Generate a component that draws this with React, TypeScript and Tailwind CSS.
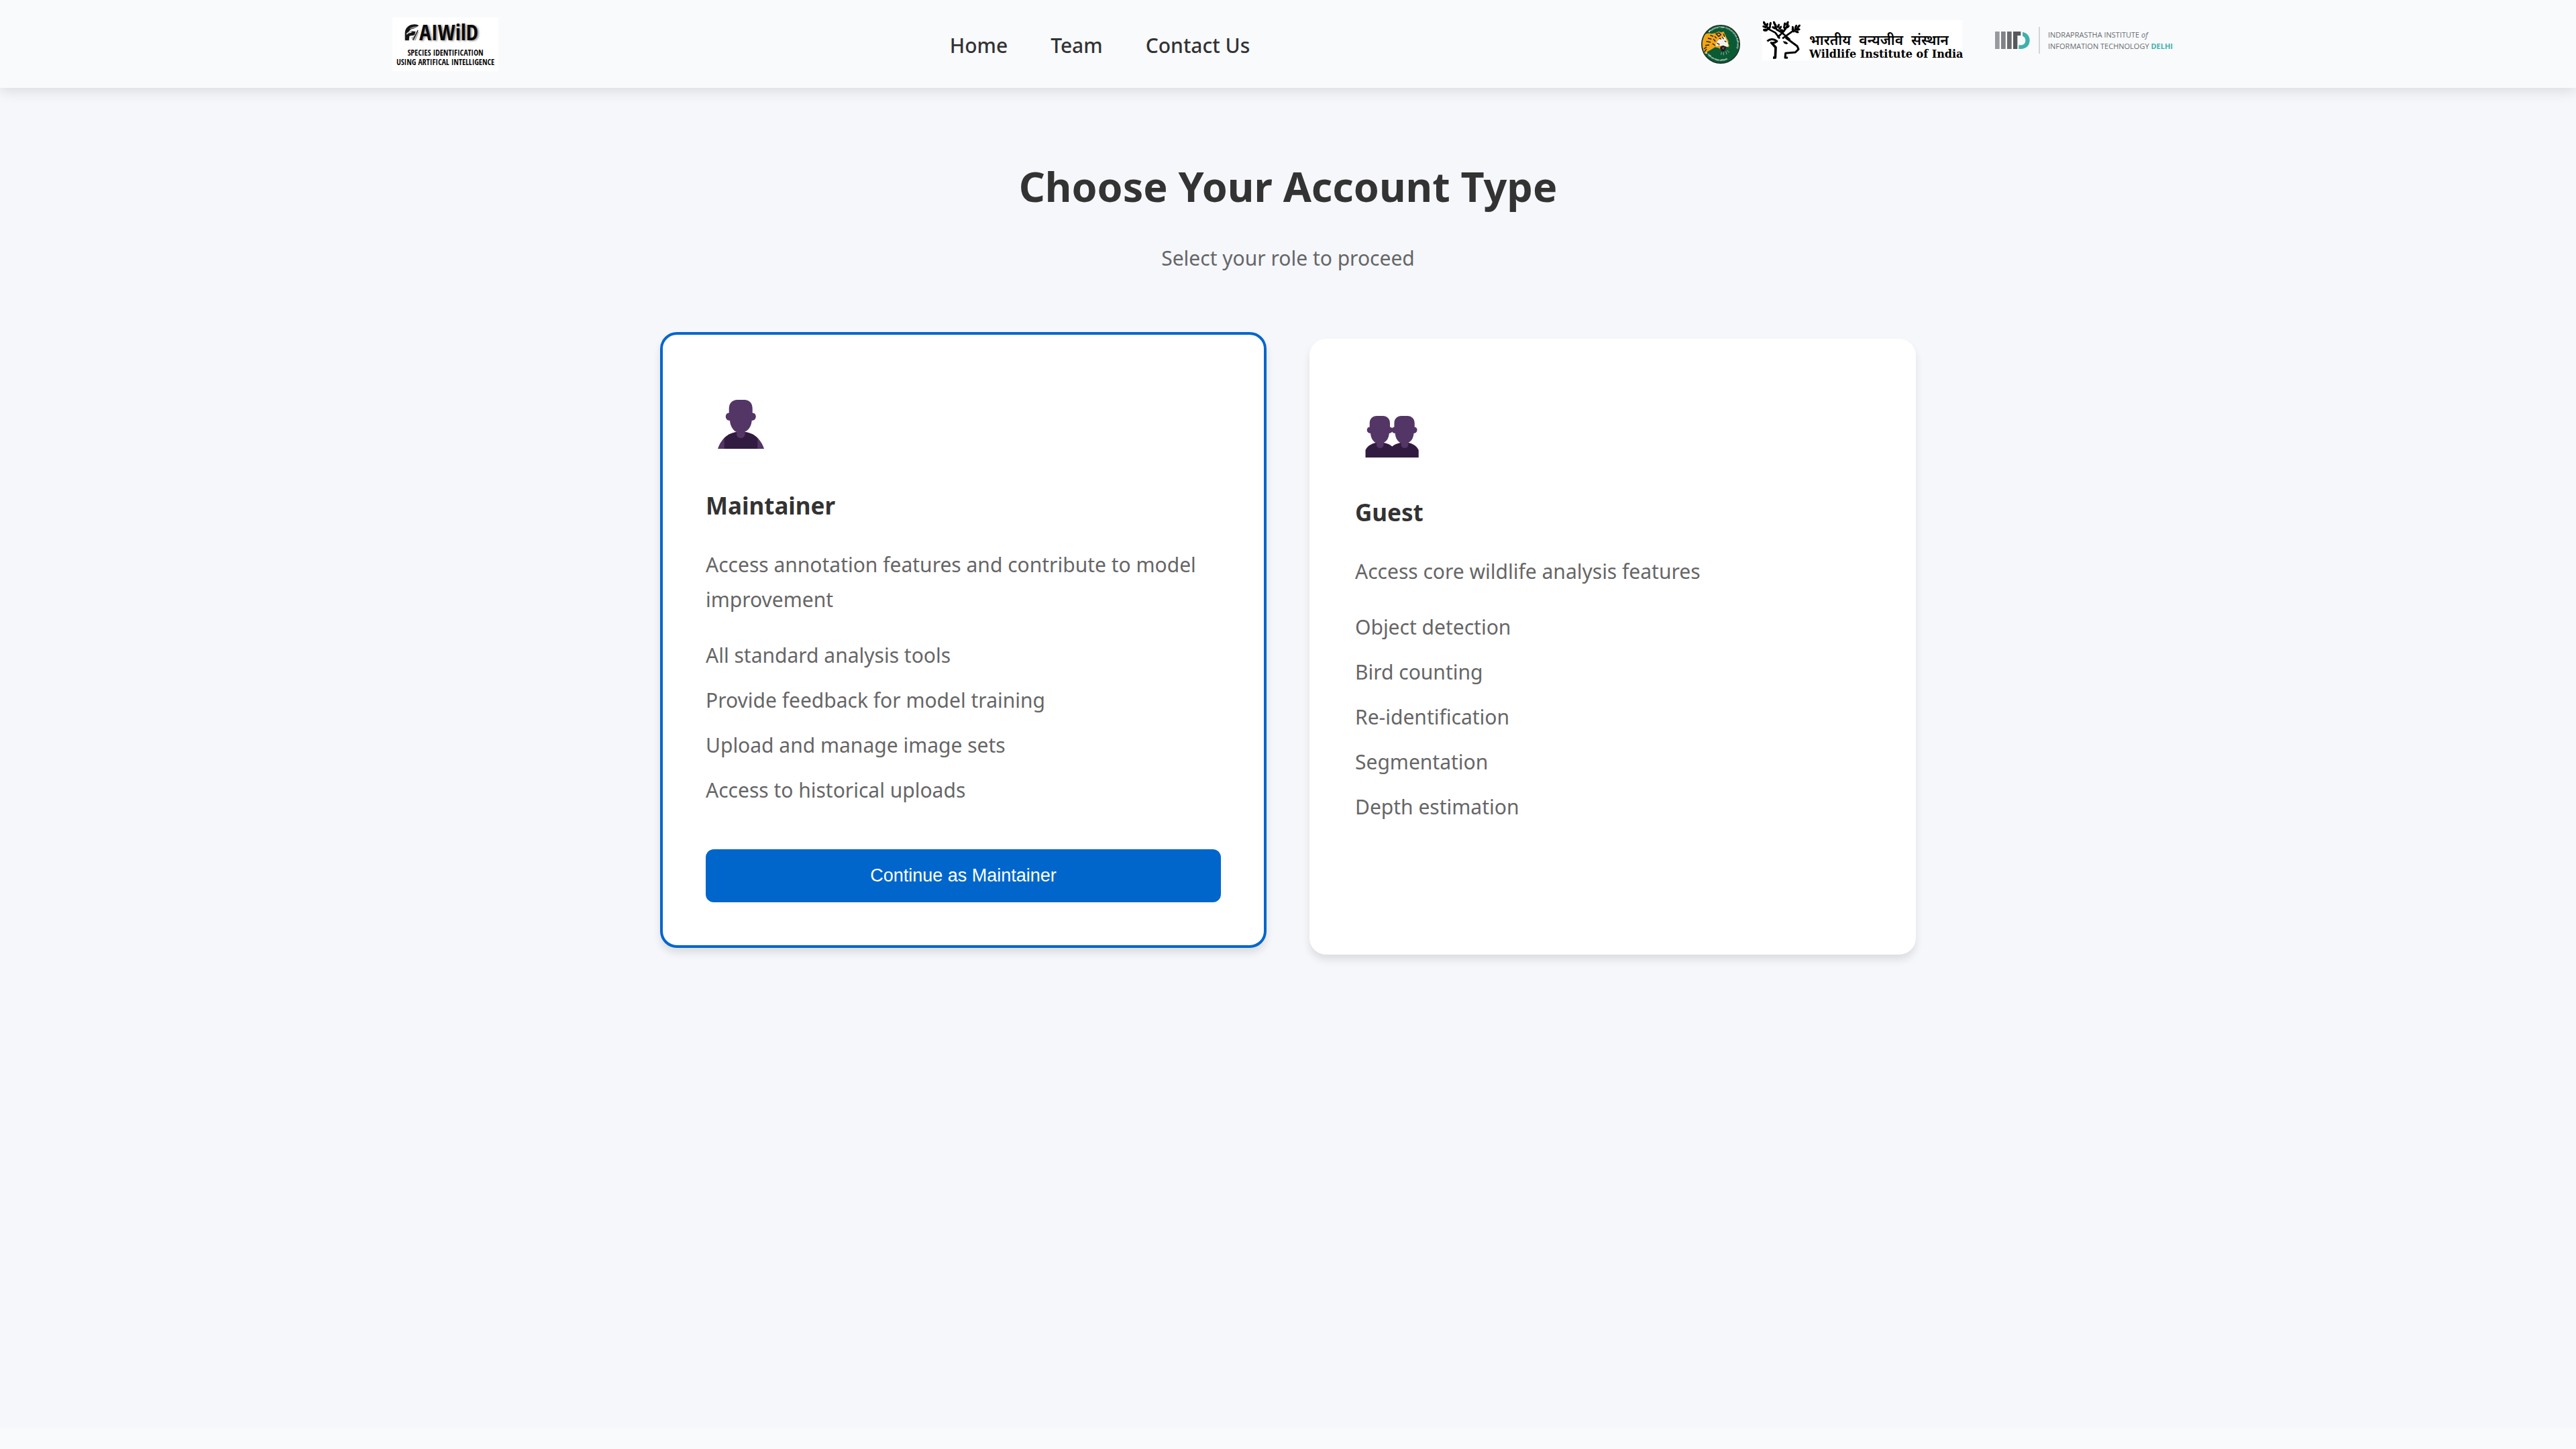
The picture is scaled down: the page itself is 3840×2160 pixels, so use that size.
import React from "react";

const sans = "font-['Noto_Sans','Open_Sans',sans-serif]";

function AiWildLogo() {
  return (
    <a
      href="#home"
      aria-label="AIWilD home"
      className="flex h-20 w-[158px] flex-col items-center bg-white pt-1 font-['Open_Sans_Condensed','Roboto_Condensed',sans-serif] font-bold text-[#0b0b0b]"
    >
      <span className="flex items-center pr-3">
        <svg viewBox="0 0 66 78" className="h-[26px] w-[22px]" aria-hidden="true">
          <path d="M2 76V40C4 18 22 4 46 4c8 0 14 2 18 6L44 22 28 26 16 40l14-6 20 2-6 16-22 4-2 20z" fill="#161616" />
          <path d="M20 26c10-10 24-14 38-12L44 22c-10 0-18 2-24 4z" fill="#8d8d8d" />
          <path d="M8 46c6-8 16-12 28-10l-8 6c-6 0-12 2-18 8z" fill="#d6d6d6" />
          <path d="M30 62c12-2 22-14 28-32l6 10-14 36H36z" fill="#b5b5b5" />
          <path d="M38 74l22-44M26 50c8 4 14 2 20-4" stroke="#161616" strokeWidth="4" fill="none" />
        </svg>
        <span className="text-[33px] leading-[36px] [text-shadow:2px_1px_3px_rgba(0,0,0,0.45)]">AIWilD</span>
      </span>
      <span className="mt-1.5 text-[12px] leading-[14px]">SPECIES IDENTIFICATION</span>
      <span className="text-[12px] leading-[14px]">USING ARTIFICAL INTELLIGENCE</span>
    </a>
  );
}

function TigerBadge() {
  return (
    <svg viewBox="0 0 174 174" className="size-[58px] overflow-visible" role="img" aria-label="National Tiger Conservation Authority">
      <defs>
        <path id="badge-top" d="M40 31A73 73 0 0 1 138.600 138.600" />
        <path id="badge-bottom" d="M28 132A74 74 0 0 0 138 141" />
        <clipPath id="badge-clip">
          <circle cx="87" cy="87" r="82" />
        </clipPath>
      </defs>
      <circle cx="87" cy="87" r="85" fill="#0a5a34" stroke="#1e2a24" strokeWidth="4" />
      <g clipPath="url(#badge-clip)">
        <path
          d="M0 60C14 40 30 34 46 40l20-4 12-6 12 4 10-4 6 12 8 18 8 14-2 10 6 10-4 6-14-2-4 10-16 6-8-10-18-4-16 10-22 12-14 24-14-10z"
          fill="#f2a516"
        />
        <path d="M76 68l14-8 8-10 10 8 6 14 8 16-4 10-14-2-14 2-10-8-10 6-6-8z" fill="#f4f1ea" />
        <path d="M86 96l12-4 14 6-6 16-12 6-10-12z" fill="#1b1b1b" />
        <path d="M92 102l12-2-6 12z" fill="#9c4a52" />
        <path
          d="M66 40l14-4 8 8-10 8zM80 60l10 4M94 54l6 10M104 72l8 4M70 82l12 6M40 46l14 6M30 60l16 4M22 74l20 4M18 92l18-2M12 108l12-10M54 64l10 10M50 84l12 8M12 124l12-16M60 52l8 8M100 40l4 14"
          stroke="#1b1b1b"
          strokeWidth="4"
          fill="none"
        />
        <path d="M92 122l-4 12M100 122v14M110 118l4 14M116 114l8 10" stroke="#dfe8e2" strokeWidth="2" />
      </g>
      <circle cx="36" cy="30" r="3" fill="#fff" />
      <circle cx="24" cy="126" r="3" fill="#fff" />
      <text fill="#fff" fontSize="10" fontWeight="600" fontFamily="Noto Sans, sans-serif">
        <textPath href="#badge-top">National Tiger Conservation Authority</textPath>
      </text>
      <text fill="#fff" fontSize="9" fontWeight="600" fontFamily="Noto Sans Devanagari, Noto Sans, sans-serif">
        <textPath href="#badge-bottom">राष्ट्रीय बाघ संरक्षण प्राधिकरण</textPath>
      </text>
    </svg>
  );
}

const leaves: [number, number, number][] = [
  [333, 72, 70], [345, 80, 110], [334, 88, 20], [338, 104, 0], [356, 92, 120], [360, 76, 100],
  [378, 72, 70], [384, 84, 80], [376, 92, 30], [396, 84, 110], [404, 92, 130], [412, 104, 20],
  [424, 78, 100], [436, 72, 120], [438, 88, 140], [424, 94, 60], [461, 94, 80], [474, 88, 110],
  [487, 86, 130], [484, 100, 170], [478, 110, 20], [462, 104, 60],
];

function WildlifeInstituteLogo() {
  return (
    <div className="mb-3 flex h-[60px] w-[298px] items-end bg-white text-black">
      <svg viewBox="324 58 180 180" className="size-[60px] shrink-0" aria-hidden="true">
        {leaves.map(([x, y, r], i) => (
          <ellipse key={i} cx={x} cy={y} rx="10" ry="5" transform={`rotate(${r} ${x} ${y})`} />
        ))}
        <g fill="none" stroke="#000" strokeLinejoin="round">
          <path strokeWidth="8" d="M330 66l22 32 30 16 20 26M376 66l12 34 24 14 36 32M440 74l-18 32-30 30M486 92l-30 18-42 30M352 98l-24 4" />
          <path strokeWidth="9" d="M346 152c12-10 28-12 44 0-8 8-16 10-30 6" />
          <path strokeWidth="11" d="M366 160l18 20-2 46h-10" />
          <path strokeWidth="9" d="M428 136l52 38 6 14-14 14-44 4-2 20h12" />
        </g>
        <path d="M416 152l14 2 10 8-8 4-10-4z" />
      </svg>
      <div className="flex flex-col pl-2.5">
        <span className="flex gap-3 font-['Noto_Sans_Devanagari','Noto_Sans',sans-serif] text-[21px] font-semibold leading-[20px]">
          <span>भारतीय</span>
          <span>वन्यजीव</span>
          <span>संस्थान</span>
        </span>
        <span className="whitespace-nowrap font-['DejaVu_Serif',serif] text-[16px] font-bold leading-[18px]">
          Wildlife Institute of India
        </span>
      </div>
    </div>
  );
}

function IiitdLogo() {
  return (
    <div className="mb-3 flex h-[60px] w-[297px] items-center pl-4">
      <svg viewBox="0 0 156 78" className="h-[26px] w-[52px]" aria-hidden="true">
        <path d="M0 0h20v78H0z" fill="#98999d" />
        <path d="M27 0h20v78H27z" fill="#818286" />
        <path d="M54 0h20v78H54z" fill="#6b6c70" />
        <path d="M81 0h34v18h-15v60H81z" fill="#57585b" />
        <path d="M123 2c20 4 32 18 32 37 0 24-17 39-40 39h-9V61h8c14 0 22-8 22-22 0-9-5-16-13-19z" fill="#3fb0ab" />
      </svg>
      <span className="ml-[13px] h-10 w-0.5 bg-[#d3d5d8]" />
      <span className="ml-3 flex flex-col whitespace-nowrap font-['Open_Sans',sans-serif] text-[11px] leading-[17px] text-[#6b6c70]">
        <span>
          INDRAPRASTHA INSTITUTE <i>of</i>
        </span>
        <span>
          INFORMATION TECHNOLOGY <b className="text-[#3fb0ab]">DELHI</b>
        </span>
      </span>
    </div>
  );
}

function MaintainerIcon() {
  return (
    <svg viewBox="0 0 120 133" className="h-[133px] w-[120px]" aria-hidden="true">
      <path d="M18 106c5-15 16-25.500 34.500-25.500S82 91 87 106z" fill="#533566" />
      <path d="M27.700 106V90c6-6 14-9.500 24.800-9.500S71.300 84 77.300 90v16z" fill="#321b41" />
      <path
        d="M46 80v4c0 8 12.500 8 12.500 0v-3.500c5.500-2 9.500-8.500 10.200-16.500 8 0 8-11.500 1-11.500V46c0-8-5-13-12-13H47c-7 0-12.300 5-12.300 13v6.500c-6.700 0-6.700 11.500 1.300 11.500C36.500 72 41 79 46 81z"
        fill="#533566"
      />
    </svg>
  );
}

function GuestHead() {
  return (
    <path
      d="M32 87v3c0 6.500 10.500 6.500 10.500 0v-3c4.500-2 7.800-7 8.300-14 6.500 0 6.500-9.500 1.200-9.500V58c0-7-4.500-11-10.500-11h-9.300c-6 0-10.500 4-10.500 11v5.500c-5.500 0-5.500 9.500 1.300 9.500C23.500 80 27 86 32 87.500z"
      fill="#533566"
    />
  );
}

function GuestIcon() {
  return (
    <svg viewBox="0 0 120 133" className="h-[133px] w-[120px]" aria-hidden="true">
      <path
        d="M15.500 109V98c3-7 11-11.500 21.500-11.500 8 0 14 2.500 18.300 6 4.300-3.500 10.400-6 18.400-6 10.500 0 18 4.500 21 11.500v11z"
        fill="#321b41"
      />
      <GuestHead />
      <g transform="translate(36.700 0)">
        <GuestHead />
      </g>
    </svg>
  );
}

function RoleCard({
  icon,
  title,
  description,
  features,
  action,
}: {
  icon: React.ReactNode;
  title: string;
  description: string;
  features: string[];
  action?: string;
}) {
  return (
    <section
      className={
        "flex flex-col rounded-[25px] border-4 bg-white p-16 shadow-[0_8px_12px_rgba(0,0,0,0.1)] " +
        (action ? "-translate-y-2.5 border-[#0066cc]" : "border-white")
      }
    >
      {icon}
      <h2 className="mt-[34px] text-[35px] font-bold leading-[48px] text-[#333]">{title}</h2>
      <p className="mt-[38px] text-[30px] leading-[52px] text-[#666]">{description}</p>
      <ul className="mt-[31px] flex flex-col gap-[15px] text-[30px] leading-[52px] text-[#666]">
        {features.map((f) => (
          <li key={f}>{f}</li>
        ))}
      </ul>
      {action && (
        <button
          type="button"
          className="mt-[62px] h-[79px] rounded-xl bg-[#0066cc] font-['Liberation_Sans',Arial,sans-serif] text-[27px] text-white"
        >
          {action}
        </button>
      )}
    </section>
  );
}

export default function App() {
  return (
    <div className={`flex min-h-screen flex-col bg-[#f8fafc] ${sans}`}>
      <header className="relative bg-[#f8fafc] shadow-[0_4px_20px_rgba(0,0,0,0.12)]">
        <div className="mx-auto flex h-[131px] max-w-[2670px] items-center justify-between">
          <AiWildLogo />
          <nav className="flex gap-16 pt-1 text-[30px] font-medium leading-[42px] text-[#333]">
            <a href="#home">Home</a>
            <a href="#team">Team</a>
            <a href="#contact">Contact Us</a>
          </nav>
          <div className="flex items-center gap-[33px]">
            <TigerBadge />
            <WildlifeInstituteLogo />
            <IiitdLogo />
          </div>
        </div>
      </header>

      <main className="mb-8 flex-1 bg-[#f5f7fb] px-8 pt-[107px]">
        <h1 className="text-center text-[61px] font-bold leading-[80px] text-[#333]">Choose Your Account Type</h1>
        <p className="mt-[41px] text-center text-[30px] leading-[52px] text-[#666]">Select your role to proceed</p>
        <div className="mx-auto mt-[94px] grid max-w-[1872px] grid-cols-2 gap-16">
          <RoleCard
            icon={<MaintainerIcon />}
            title="Maintainer"
            description="Access annotation features and contribute to model improvement"
            features={[
              "All standard analysis tools",
              "Provide feedback for model training",
              "Upload and manage image sets",
              "Access to historical uploads",
            ]}
            action="Continue as Maintainer"
          />
          <RoleCard
            icon={<GuestIcon />}
            title="Guest"
            description="Access core wildlife analysis features"
            features={["Object detection", "Bird counting", "Re-identification", "Segmentation", "Depth estimation"]}
          />
        </div>
      </main>
    </div>
  );
}
